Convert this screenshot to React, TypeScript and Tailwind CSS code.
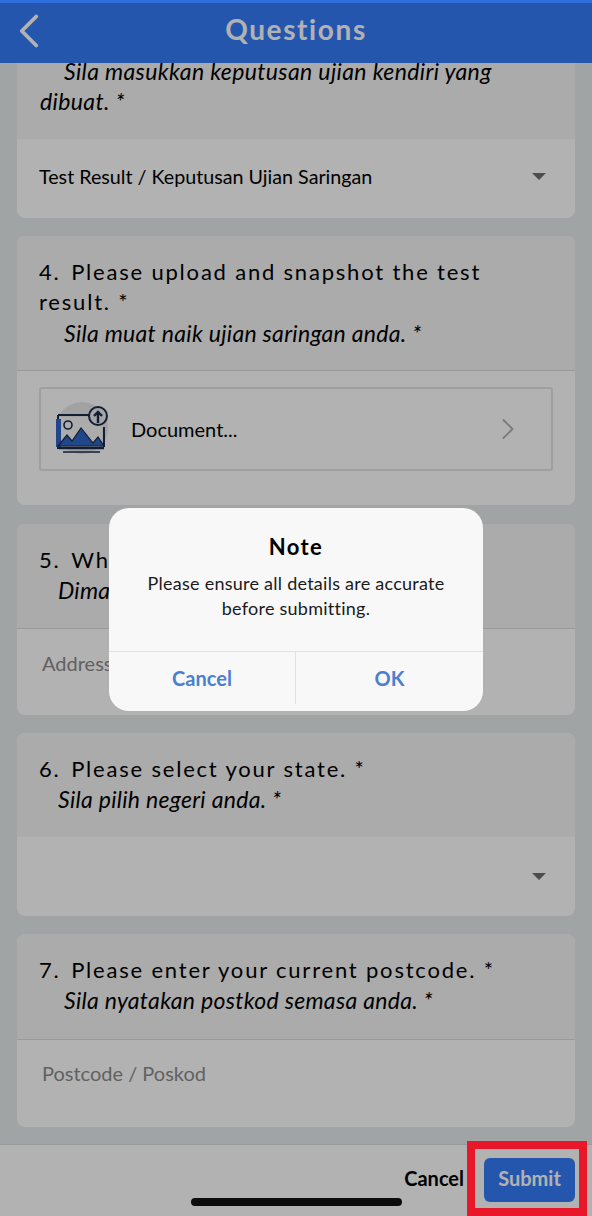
import { ChevronLeft, ChevronRight } from 'lucide-react';
import type { ReactNode } from 'react';

function Caret() {
  return <span className="h-0 w-0 border-x-[7px] border-t-[7px] border-x-transparent border-t-[#6f6f6f]" />;
}

function Question({ title, sub, subIndent }: { title: ReactNode; sub: string; subIndent: string }) {
  return (
    <div className="px-[22px] pt-[21px] text-[22px] leading-[30.25px] text-black">
      <p className="whitespace-pre-wrap tracking-[1.8px]">{title}</p>
      <p className={`text-[23px] italic tracking-[0.3px] ${subIndent}`}>{sub}</p>
    </div>
  );
}

function UploadIcon() {
  return (
    <svg width="56" height="56" viewBox="0 0 56 56" className="shrink-0">
      <circle cx="27" cy="27" r="26" fill="#e8e8e8" />
      <path d="M3 16h44v32H3z" fill="#f6f6f6" />
      <path d="M3 14h36M3 14v34M49 26v20" stroke="#1b2b4d" strokeWidth="2" fill="none" />
      <path d="M1 18h5v28H1z" fill="#2f66c4" />
      <circle cx="13" cy="24" r="4" fill="none" stroke="#1b2b4d" strokeWidth="1.6" />
      <path d="M3 45l9-11 5 6 9-13 12 15 5-6 6 9z" fill="#2f66c4" stroke="#1b2b4d" strokeWidth="1.2" />
      <path d="M4 47h45" stroke="#1b2b4d" strokeWidth="2.4" />
      <path d="M8 51h37" stroke="#1b2b4d" strokeWidth="1.6" />
      <circle cx="43" cy="15" r="9" fill="#ececec" stroke="#1b2b4d" strokeWidth="2" />
      <path d="M43 22v-11M39 15l4-4 4 4" stroke="#1b2b4d" strokeWidth="2.4" fill="none" />
    </svg>
  );
}

export default function App() {
  return (
    <div className="relative flex h-[1216px] w-[592px] flex-col overflow-hidden bg-[#e6ebec] font-['Lato','Noto_Sans',sans-serif]">
      <header className="relative z-10 flex h-[63px] shrink-0 items-center justify-center bg-[#357cf8] pb-[5px] text-white">
        <ChevronLeft className="absolute left-0 top-[2px]" size={58} strokeWidth={1.6} />
        <h1 className="text-[28px] font-bold tracking-[1.6px]">Questions</h1>
      </header>

      <main className="flex min-h-0 flex-1 flex-col gap-[18px] overflow-hidden px-[17px]">
        <section className="shrink-0 overflow-hidden rounded-b-lg bg-white">
          <div className="-mt-[7px] h-[83px] bg-[#f5f5f5] px-[23px] text-[23px] italic leading-[30px] tracking-[0.37px] text-black">
            <p>
              <span className="pl-[24px]">Sila masukkan keputusan ujian kendiri yang</span>
              <br />
              dibuat. *
            </p>
          </div>
          <div className="flex h-[79px] items-center justify-between pb-[4px] pl-[22px] pr-[29px] text-[19.7px]">
            <span>Test Result / Keputusan Ujian Saringan</span>
            <Caret />
          </div>
        </section>

        <section className="h-[269px] shrink-0 overflow-hidden rounded-lg bg-white">
          <div className="h-[135px] border-b border-[#dcdcdc] bg-[#f5f5f5]">
            <Question title={'4. \u200APlease upload and snapshot the test result. *'} sub="Sila muat naik ujian saringan anda. *" subIndent="pl-[25px]" />
          </div>
          <div className="mx-[22px] mt-[16px] flex h-[84px] items-center gap-[20px] rounded-[3px] border-2 border-[#e4e4e4] pl-[14px] pr-[25px]">
            <UploadIcon />
            <span className="flex-1 text-[20px]">Document...</span>
            <ChevronRight size={36} strokeWidth={1.2} className="text-[#b0b0b0]" />
          </div>
        </section>

        <section className="mt-px h-[191px] shrink-0 overflow-hidden rounded-lg bg-white">
          <div className="h-[105px] border-b border-[#dcdcdc] bg-[#f5f5f5]">
            <Question title={'5. \u200AWhere do you currently live? *'} sub="Dimanakah alamat semasa tinggal? *" subIndent="pl-[19px]" />
          </div>
          <p className="px-[25px] pt-[19px] text-[20px] text-[#8c8c8c]">Address / Alamat</p>
        </section>

        <section className="h-[183px] shrink-0 overflow-hidden rounded-lg bg-white">
          <div className="h-[104px] bg-[#f5f5f5]">
            <Question title={'6. \u200APlease select your state. *'} sub="Sila pilih negeri anda. *" subIndent="pl-[19px]" />
          </div>
          <div className="flex h-[79px] items-center justify-end pr-[29px]">
            <Caret />
          </div>
        </section>

        <section className="h-[193px] shrink-0 overflow-hidden rounded-lg bg-white">
          <div className="h-[106px] border-b border-[#dcdcdc] bg-[#f5f5f5]">
            <Question title={'7. \u200APlease enter your current postcode. *'} sub="Sila nyatakan postkod semasa anda. *" subIndent="pl-[25px]" />
          </div>
          <p className="px-[25px] pt-[18px] text-[20px] text-[#8c8c8c]">Postcode / Poskod</p>
        </section>
      </main>

      <footer className="flex h-[72px] shrink-0 items-start justify-end gap-[20px] border-t border-[#dcdcdc] bg-white pr-[17px] pt-[13px]">
        <span className="mt-[5px] text-[20px] font-bold text-black">Cancel</span>
        <button className="h-[44px] w-[91px] rounded-[6px] bg-[#357cf8] pb-[4px] text-[20px] font-bold text-white">Submit</button>
      </footer>

      <div className="absolute inset-0 z-20 bg-black/30" />
      <div className="absolute inset-x-0 top-0 z-30 h-[3px] bg-[#2f6fe0]" />
      <div className="absolute left-[191px] top-[1198px] z-30 h-[8px] w-[211px] rounded-full bg-[#0c0c0c]" />
      <div className="absolute left-[467px] top-[1141px] z-30 h-[75px] w-[120px] border-[8px] border-[#e8182a]" />

      <div className="absolute left-[109px] top-[508px] z-30 flex h-[203px] w-[374px] flex-col overflow-hidden rounded-[20px] bg-[#f8f8f8] text-center">
        <div className="flex-1 pt-[24px]">
          <h2 className="text-[22px] font-bold leading-[30px] tracking-[1.4px] text-black">Note</h2>
          <p className="mt-[9px] text-[18px] leading-[25px] tracking-[0.25px] text-[#1a1a1a]">
            Please ensure all details are accurate
            <br />
            before submitting.
          </p>
        </div>
        <div className="flex h-[60px] border-t border-[#e2e2e2] pb-[7px] text-[20px] font-bold text-[#4a80cf]">
          <span className="flex w-[187px] items-center justify-center border-r border-[#e2e2e2]">Cancel</span>
          <span className="flex flex-1 items-center justify-center">OK</span>
        </div>
      </div>
    </div>
  );
}
